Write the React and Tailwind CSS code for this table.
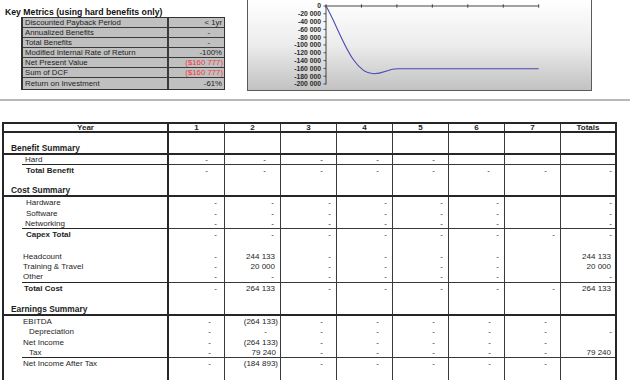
import React from "react";

const F = "font-['Liberation_Sans',Arial,sans-serif]";

const metrics = [
  ["Discounted Payback Period", "< 1yr", "", "pr-[2px]"],
  ["Annualized Benefits", "-", "", "pr-[14px]"],
  ["Total Benefits", "-", "", "pr-[14px]"],
  ["Modified Internal Rate of Return", "-100%", "", "pr-[2px]"],
  ["Net Present Value", "($160 777)", "text-[#f03c3c]", "pr-[1px]"],
  ["Sum of DCF", "($160 777)", "text-[#f03c3c]", "pr-[1px]"],
  ["Return on Investment", "-61%", "", "pr-[2px]"],
];

const PR = {
  1: "pr-[1px]",
  2: "pr-[2px]",
  3: "pr-[3px]",
  4: "pr-[4px]",
  5: "pr-[5px]",
  6: "pr-[6px]",
  7: "pr-[7px]",
  12: "pr-[12px]",
  13: "pr-[13px]",
  14: "pr-[14px]",
  16: "pr-[16px]",
};

const PL = {
  0: "pl-0",
  1: "pl-[1px]",
  2: "pl-[2px]",
  3: "pl-[3px]",
  7: "pl-[7px]",
  19: "pl-[19px]",
  20: "pl-[20px]",
  22: "pl-[22px]",
  25: "pl-[25px]",
};

const d = (pr) => ["-", pr];
const E = ["", 0];

const rows = [
  { h: "h-[11px]" },
  { h: "h-[11px]", label: "Benefit Summary", sec: true, thick: true },
  { h: "h-[10px]", label: "Hard", pl: 3, thin: true, vals: [d(16), d(14), d(13), d(13), d(13), E, E, E] },
  { h: "h-[11px]", label: "Total Benefit", pl: 22, bold: true, vals: [d(16), d(14), d(13), d(13), d(13), d(14), d(13), d(3)] },
  { h: "h-[10px]" },
  { h: "h-[11px]", label: "Cost Summary", sec: true, thick: true },
  { h: "h-[11px]", label: "Hardware", pl: 22, vals: [d(7), d(6), d(5), d(5), d(5), d(5), E, d(3)] },
  { h: "h-[11px]", label: "Software", pl: 22, vals: [d(7), d(6), d(5), d(5), d(5), d(5), E, d(3)] },
  { h: "h-[10px]", label: "Networking", pl: 3, thin: true, vals: [d(7), d(6), d(5), d(5), d(5), d(5), E, d(3)] },
  { h: "h-[11px]", label: "Capex Total", pl: 22, bold: true, vals: [d(7), d(6), d(5), d(5), d(5), d(5), d(5), d(3)] },
  { h: "h-[11px]" },
  { h: "h-[11px]", label: "Headcount", pl: 19, vals: [d(7), ["244 133", 5], d(5), d(5), d(5), d(5), E, ["244 133", 4]] },
  { h: "h-[10px]", label: "Training & Travel", pl: 19, vals: [d(7), ["20 000", 5], d(5), d(5), d(5), d(5), E, ["20 000", 4]] },
  { h: "h-[11px]", label: "Other", pl: 1, thin: true, vals: [d(7), d(6), d(5), d(5), d(5), d(5), E, d(3)] },
  { h: "h-[11px]", label: "Total Cost", pl: 20, bold: true, vals: [d(7), ["264 133", 5], d(5), d(5), d(5), d(5), d(5), ["264 133", 4]] },
  { h: "h-[11px]" },
  { h: "h-[11px]", label: "Earnings Summary", sec: true, thick: true },
  { h: "h-[11px]", label: "EBITDA", pl: 19, vals: [d(13), ["(264 133)", 2], d(13), d(13), d(13), d(13), d(13), E] },
  { h: "h-[10px]", label: "Depreciation", pl: 25, vals: [d(13), d(13), d(13), d(13), d(13), d(13), d(13), d(3)] },
  { h: "h-[11px]", label: "Net Income", pl: 19, vals: [d(13), ["(264 133)", 2], d(13), d(13), d(13), d(13), d(13), E] },
  { h: "h-[10px]", label: "Tax", pl: 7, thin: true, vals: [d(13), ["79 240", 4], d(13), d(13), d(13), d(13), d(13), ["79 240", 4]] },
  { h: "h-[11px]", label: "Net Income After Tax", pl: 19, vals: [d(13), ["(184 893)", 2], d(13), d(13), d(13), d(13), d(13), E] },
  { h: "h-[14px]" },
];

const colW = [
  "w-[56px] border-r",
  "w-[56px] border-r",
  "w-[56px] border-r",
  "w-[56px] border-r",
  "w-[56px] border-r",
  "w-[56px] border-r",
  "w-[56px] border-r",
  "flex-1",
];

function Chart() {
  const labels = ["0", "-20 000", "-40 000", "-60 000", "-80 000", "-100 000", "-120 000", "-140 000", "-160 000", "-180 000", "-200 000"];
  const ticks = [0, 1, 2, 3, 4, 5, 6].map((i) => 78 + i * 35.45);
  return (
    <svg width="345" height="90" viewBox="0 0 345 90" className="block">
      {labels.map((l, i) => {
        const y = 6 + i * 7.8;
        return (
          <g key={l}>
            <text
              x="73"
              y={y + 2.4}
              textAnchor="end"
              fontSize="6.8"
              fontWeight="bold"
              fill="#2a2a2a"
              fontFamily="'Liberation Sans', Arial, sans-serif"
            >
              {l}
            </text>
            <line x1="75.5" y1={y} x2="78" y2={y} stroke="#333" strokeWidth="0.8" />
          </g>
        );
      })}
      <line x1="78" y1="5.5" x2="78" y2="84.5" stroke="#333" strokeWidth="0.9" />
      <line x1="78" y1="6" x2="290.7" y2="6" stroke="#333" strokeWidth="0.9" />
      {ticks.map((x) => (
        <line key={x} x1={x} y1="4.3" x2={x} y2="7.7" stroke="#333" strokeWidth="0.9" />
      ))}
      <path
        d="M78,6 C92,30 104,74 125.7,73.7 C136,73.5 140,68.7 150,68.7 L290.7,68.7"
        fill="none"
        stroke="#4a4ab0"
        strokeWidth="1.1"
      />
    </svg>
  );
}

function Row({ r }) {
  const thickCls = r.thick ? "border-b-2" : "";
  return (
    <div className={`flex ${r.h} ${thickCls} border-[#262626]`}>
      <div className={`w-[165px] border-r-2 border-[#262626] flex items-center`}>
        {r.label && r.sec && (
          <span className={`pl-[7px] font-bold leading-none text-[8.4px]`}>{r.label}</span>
        )}
        {r.label && !r.sec && r.thin && (
          <div className="ml-[18px] flex-1 self-stretch border-b border-[#262626] flex items-center">
            <span className={`${PL[r.pl]} leading-none ${r.bold ? "font-bold" : ""}`}>{r.label}</span>
          </div>
        )}
        {r.label && !r.sec && !r.thin && (
          <span className={`${PL[r.pl]} leading-none ${r.bold ? "font-bold" : ""}`}>{r.label}</span>
        )}
      </div>
      {colW.map((c, i) => {
        const v = r.vals ? r.vals[i] : E;
        return (
          <div
            key={i}
            className={`${c} border-[#3a3a3a] flex items-center justify-end ${r.thin ? "border-b" : ""} ${PR[v[1]] || ""}`}
          >
            <span className="leading-none">{v[0]}</span>
          </div>
        );
      })}
    </div>
  );
}

export default function App() {
  const heads = ["1", "2", "3", "4", "5", "6", "7", "Totals"];
  return (
    <div className={`${F} w-[630px] h-[380px] overflow-hidden bg-white text-[#1e1e1e]`}>
      <div className="flex h-[99px]">
        <div className="w-[247px] flex flex-col">
          <div className="h-[17px] pl-[5px] pt-[8px] text-[8.7px] font-bold leading-none text-[#111] whitespace-nowrap">
            Key Metrics (using hard benefits only)
          </div>
          <div className="ml-[21px] w-[204px] border-t border-r border-b border-l-2 border-[#333] bg-[#c0c0c0] text-[7.8px]">
            {metrics.map(([l, v, col, pr], i) => (
              <div
                key={l}
                className={`flex ${i === 6 ? "h-[11px]" : "h-[10px] border-b"} border-[#3a3a3a]`}
              >
                <div className="w-[146px] border-r-2 border-[#3a3a3a] pl-[2px] flex items-center leading-none whitespace-nowrap">
                  {l}
                </div>
                <div className={`flex-1 flex items-center justify-end leading-none ${pr} ${col}`}>{v}</div>
              </div>
            ))}
          </div>
        </div>
        <div className="w-[345px] h-[91px] border-l border-r border-b border-[#5a5a5a] bg-gradient-to-b from-white via-[#ececec] to-[#c2c2c2]">
          <Chart />
        </div>
      </div>
      <div className="h-[2px] bg-[#b8b8b8]" />
      <div className="h-[21px]" />
      <div className="ml-[2px] w-[615px] border-l-2 border-r-2 border-[#262626] text-[8px]">
        <div className="flex h-[11px] border-t-2 border-b-2 border-[#262626] font-bold">
          <div className="w-[165px] border-r-2 border-[#262626] flex items-center justify-center leading-none">
            Year
          </div>
          {heads.map((h, i) => (
            <div key={h} className={`${colW[i]} border-[#3a3a3a] flex items-center justify-center leading-none`}>
              {h}
            </div>
          ))}
        </div>
        {rows.map((r, i) => (
          <Row key={i} r={r} />
        ))}
      </div>
    </div>
  );
}
